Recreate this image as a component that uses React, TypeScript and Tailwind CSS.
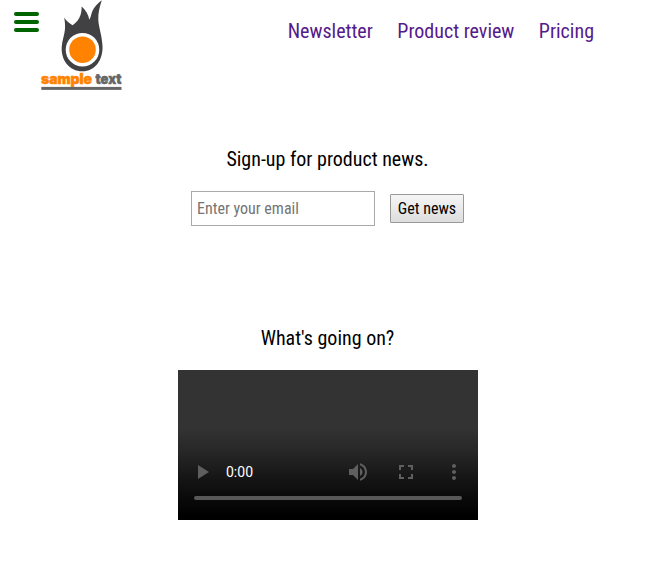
import React from "react";

function Logo() {
  return (
    <svg className="ml-px h-[94px] w-[84px]" viewBox="40 0 84 94" role="img" aria-label="sample text">
      <path
        d="M64.200 17.500C66 20.500 69 23 72.500 25.300C76 23 79 19.500 80.500 15C81.500 12 81.600 9.500 81.600 6.500C85.500 10 88.600 14.500 89.300 19.800C90.700 17.500 91 15 92 12C94 7 97.500 3.500 101.800 0.300C99.500 7 98 13.500 98.300 20C98.800 28 102 35 102.500 46C103.200 60 95 71.300 82.500 71.300C69 71.300 61 60 61.700 47C62 41 64.500 35 65 29C65.300 25 64.800 21 64.200 17.500Z"
        fill="#414042"
      />
      <circle cx="82.500" cy="49.700" r="16.800" fill="#fff" />
      <circle cx="82.500" cy="49.700" r="13.300" fill="#ff8200" />
      <g fontFamily="Inter, 'Liberation Sans', sans-serif" fontWeight="900" fontSize="14" strokeWidth="0.5">
        <text x="41" y="83.500" textLength="51" lengthAdjust="spacingAndGlyphs" fill="#ff8200" stroke="#ff8200">sample</text>
        <text x="95.500" y="83.500" textLength="26" lengthAdjust="spacingAndGlyphs" fill="#666" stroke="#666">text</text>
      </g>
      <rect x="41.300" y="86.900" width="80.200" height="3" fill="#666" />
    </svg>
  );
}

function MenuButton() {
  return (
    <button aria-label="Menu" className="ml-[14px] mt-3 flex w-[25px] flex-col gap-1">
      <span className="h-1 rounded-full bg-[#006400]" />
      <span className="h-1 rounded-full bg-[#006400]" />
      <span className="h-1 rounded-full bg-[#006400]" />
    </button>
  );
}

function Icon({ d }: { d: string }) {
  return (
    <svg viewBox="0 0 24 24" className="size-6" fill="#5f5f5f">
      <path d={d} />
    </svg>
  );
}

function Player() {
  return (
    <div className="mt-[18px] flex h-[150px] w-[300px] flex-col justify-end bg-[linear-gradient(to_bottom,#333_0px,#333_58px,#282828_80px,#141414_110px,#000_146px)]">
      <div className="flex h-12 items-center pl-3">
        <Icon d="M8 5v14l11-7z" />
        <span className="ml-[12.5px] font-[Roboto,sans-serif] text-sm text-white font-stretch-normal">0:00</span>
        <div className="ml-auto flex gap-6 pr-3">
          <Icon d="M3 9v6h4l5 5V4L7 9H3zm13.500 3c0-1.770-1.020-3.290-2.500-4.030v8.050c1.480-.730 2.500-2.250 2.500-4.020zM14 3.230v2.060c2.890.860 5 3.540 5 6.710s-2.110 5.850-5 6.710v2.060c4.010-.910 7-4.490 7-8.770s-2.990-7.860-7-8.770z" />
          <Icon d="M7 14H5v5h5v-2H7v-3zm-2-4h2V7h3V5H5v5zm12 7h-3v2h5v-5h-2v3zM14 5v2h3v3h2V5h-5z" />
          <Icon d="M12 8c1.100 0 2-.9 2-2s-.9-2-2-2-2 .9-2 2 .9 2 2 2zm0 2c-1.100 0-2 .9-2 2s.9 2 2 2 2-.9 2-2-.9-2-2-2zm0 6c-1.100 0-2 .9-2 2s.9 2 2 2 2-.9 2-2-.9-2-2-2z" />
        </div>
      </div>
      <div className="mx-4 mb-5 h-1 rounded-full bg-[#585858]" />
    </div>
  );
}

export default function App() {
  return (
    <div className="flex min-h-[584px] w-full flex-col bg-white font-['Roboto_Condensed',Roboto,sans-serif] text-xl font-stretch-condensed text-black">
      <header className="flex h-[94px] items-start">
        <MenuButton />
        <Logo />
        <nav className="ml-auto mr-[61px] mt-[17px] flex gap-[24.5px] text-[#551a8b]">
          <a href="#newsletter">Newsletter</a>
          <a href="#review">Product review</a>
          <a href="#pricing">Pricing</a>
        </nav>
      </header>
      <section id="newsletter" className="mt-[51px] flex h-[179px] flex-col items-center">
        <p>Sign-up for product news.</p>
        <form className="mt-[18px] flex items-center gap-[15px] text-base">
          <input
            type="email"
            placeholder="Enter your email"
            className="h-[35px] w-[184px] border border-[#a9a9a9] px-[5px] placeholder:text-[#757575]"
          />
          <button type="button" className="h-[29px] w-[74px] rounded-[1px] border border-[#999] bg-linear-to-b from-[#f6f6f6] to-[#dddddd] leading-[27px]">
            Get news
          </button>
        </form>
      </section>
      <section className="flex flex-col items-center">
        <p>What's going on?</p>
        <Player />
      </section>
    </div>
  );
}
